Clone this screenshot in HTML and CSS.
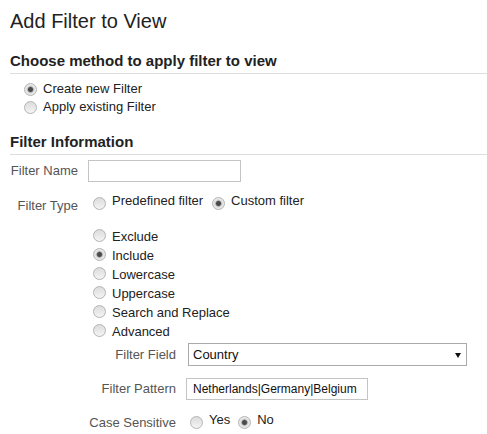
FILE: index.html
```html
<!DOCTYPE html>
<html>
<head>
<meta charset="utf-8">
<link rel="stylesheet" href="styles.css">
</head>
<body>
<div class="page">
  <h1 class="title">Add Filter to View</h1>

  <h2 class="section first">Choose method to apply filter to view</h2>
  <div class="method">
    <label class="opt"><input type="radio" class="radio" name="method" checked>Create new Filter</label>
    <label class="opt"><input type="radio" class="radio" name="method">Apply existing Filter</label>
  </div>

  <h2 class="section second">Filter Information</h2>
  <div class="form">
    <div class="row row-name">
      <span class="lbl">Filter Name</span>
      <input type="text" class="field name-field">
    </div>

    <div class="row row-type">
      <span class="lbl lbl-low">Filter Type</span>
      <div class="inline-opts">
        <label class="opt inline"><input type="radio" class="radio low" name="ftype">Predefined filter</label>
        <label class="opt inline"><input type="radio" class="radio low" name="ftype" checked>Custom filter</label>
      </div>
    </div>

    <div class="sub">
      <div class="stack">
        <label class="opt tall"><input type="radio" class="radio high" name="kind">Exclude</label>
        <label class="opt tall"><input type="radio" class="radio high" name="kind" checked>Include</label>
        <label class="opt tall"><input type="radio" class="radio high" name="kind">Lowercase</label>
        <label class="opt tall"><input type="radio" class="radio high" name="kind">Uppercase</label>
        <label class="opt tall"><input type="radio" class="radio high" name="kind">Search and Replace</label>
        <label class="opt tall"><input type="radio" class="radio high" name="kind">Advanced</label>
      </div>

      <div class="subrow row-field">
        <span class="sublbl">Filter Field</span>
        <div class="select">
          <span class="select-text">Country</span>
          <span class="arrow"></span>
        </div>
      </div>

      <div class="subrow row-pattern">
        <span class="sublbl">Filter Pattern</span>
        <input type="text" class="field pattern-field" value="Netherlands|Germany|Belgium">
      </div>

      <div class="subrow row-case">
        <span class="sublbl sublbl-low">Case Sensitive</span>
        <div class="inline-opts">
          <label class="opt inline yes"><input type="radio" class="radio low" name="case">Yes</label>
          <label class="opt inline"><input type="radio" class="radio low" name="case" checked>No</label>
        </div>
      </div>
    </div>
  </div>
</div>
</body>
</html>
```

FILE: styles.css
```css
html, body {
  margin: 0;
  padding: 0;
  background: #ffffff;
}

body {
  font-family: "Liberation Sans", Arial, sans-serif;
  font-size: 13px;
  color: #222222;
  width: 487px;
  height: 434px;
  overflow: hidden;
}

.page {
  padding: 9px 0 0 10px;
}

.title {
  margin: 0;
  font-size: 20px;
  line-height: 24px;
  font-weight: normal;
  color: #222222;
}

.section {
  margin: 0;
  font-size: 15px;
  line-height: 18px;
  font-weight: bold;
  color: #222222;
  padding-bottom: 3px;
  border-bottom: 1px solid #dddddd;
}

.section.first {
  margin-top: 19px;
}

.section.second {
  margin-top: 17px;
}

.method {
  margin-top: 6px;
  padding-left: 14px;
  display: flex;
  flex-direction: column;
}

.opt {
  display: flex;
  align-items: center;
  line-height: 18px;
  height: 18px;
  color: #222222;
  white-space: nowrap;
}

.opt.tall {
  line-height: 19px;
  height: 19px;
}

.opt.inline {
  margin-right: 9px;
}

.opt.inline.yes {
  margin-right: 8px;
}

.radio {
  -webkit-appearance: none;
  appearance: none;
  box-sizing: border-box;
  width: 13px;
  height: 13px;
  margin: 0 6px 0 0;
  border-radius: 50%;
  border: 1px solid #b4b4b4;
  background: linear-gradient(#dcdcdc, #f4f4f4);
  flex: none;
}

.radio:checked {
  background: radial-gradient(circle, #4a4a4a 0, #4a4a4a 2px, #8a8a8a 2.6px, #d8d8d8 3.4px, #e6e6e6 4.5px, #f2f2f2 100%);
}

.radio.low {
  margin-top: 4px;
}

.radio.high {
  margin-bottom: 3px;
}

.form {
  display: flex;
  flex-direction: column;
}

.row {
  display: flex;
  align-items: flex-start;
  gap: 10px;
}

.lbl {
  width: 68px;
  flex: none;
  text-align: right;
  color: #555555;
  line-height: 22px;
  white-space: nowrap;
}

.lbl-low {
  line-height: 18px;
  padding-top: 5px;
}

.row-name {
  margin-top: 5px;
  align-items: center;
}

.field {
  box-sizing: border-box;
  height: 22px;
  margin: 0;
  border: 1px solid #c4c4c4;
  border-radius: 0;
  background: #ffffff;
  font-family: "Liberation Sans", Arial, sans-serif;
  outline: none;
}

.name-field {
  width: 153px;
}

.row-type {
  margin-top: 10px;
}

.inline-opts {
  display: flex;
  margin-left: 5px;
}

.sub {
  display: flex;
  flex-direction: column;
  margin-top: 12px;
  padding-left: 78px;
}

.stack {
  display: flex;
  flex-direction: column;
  padding-left: 5px;
}

.subrow {
  display: flex;
  align-items: center;
  gap: 10px;
}

.sublbl {
  width: 88px;
  flex: none;
  text-align: right;
  color: #555555;
  white-space: nowrap;
  line-height: 22px;
}

.sublbl-low {
  align-self: flex-start;
  line-height: 18px;
  padding-top: 3px;
}

.row-field {
  margin-top: 2px;
}

.select {
  box-sizing: border-box;
  width: 279px;
  height: 23px;
  margin-left: 2px;
  border: 1px solid #aaaaaa;
  display: flex;
  align-items: center;
  justify-content: space-between;
  padding: 0 5px 0 4px;
  background: #ffffff;
}

.select-text {
  font-size: 13px;
  color: #111111;
}

.arrow {
  width: 0;
  height: 0;
  border-left: 3px solid transparent;
  border-right: 3px solid transparent;
  border-top: 5px solid #111111;
  margin-top: 1px;
}

.row-pattern {
  margin-top: 12px;
}

.pattern-field {
  width: 182px;
  font-size: 12px;
  color: #111111;
  padding: 0 6px;
}

.row-case {
  margin-top: 11px;
  align-items: flex-start;
}

.row-case .inline-opts {
  margin-left: 4px;
}
```
